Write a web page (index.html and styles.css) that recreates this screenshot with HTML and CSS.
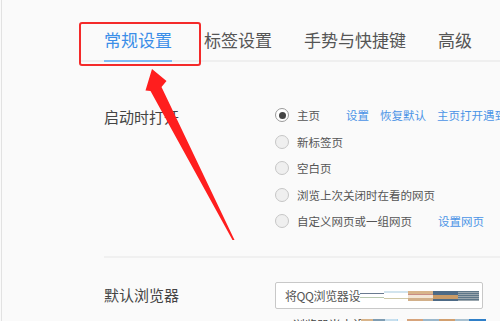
FILE: index.html
```html
<!DOCTYPE html>
<html lang="zh-CN">
<head>
  <meta charset="UTF-8" />
  <meta name="viewport" content="width=device-width, initial-scale=1.0" />
  <title>设置</title>
  <link rel="stylesheet" href="styles.css">
</head>

<body>
  <div class="page">
    <div class="tabs">
      <div class="tab active">常规设置</div>
      <div class="tab">标签设置</div>
      <div class="tab">手势与快捷键</div>
      <div class="tab">高级</div>
    </div>

    <div class="section">
      <div class="label">启动时打开</div>
      <div class="options">
        <div class="option">
          <span class="radio checked"></span>
          <span class="text">主页</span>
          <a class="link first">设置</a>
          <a class="link">恢复默认</a>
          <a class="link">主页打开遇到问题？</a>
        </div>
        <div class="option"><span class="radio"></span><span class="text">新标签页</span></div>
        <div class="option"><span class="radio"></span><span class="text">空白页</span></div>
        <div class="option"><span class="radio"></span><span class="text">浏览上次关闭时在看的网页</span></div>
        <div class="option">
          <span class="radio"></span>
          <span class="text">自定义网页或一组网页</span>
          <a class="link first">设置网页</a>
        </div>
      </div>
    </div>

    <div class="divider"></div>

    <div class="section second">
      <div class="label">默认浏览器</div>
      <div class="options">
        <div class="input">
          <span class="value">将QQ浏览器设</span>
          <span class="glitch"></span>
        </div>
        <div class="below">
          <span>QQ浏览器尚未设为默认</span>
          <span class="glitch small"></span>
        </div>
      </div>
    </div>

    <!-- annotation -->
    <div class="mark"></div>
    <svg class="arrow" width="500" height="321" viewBox="0 0 500 321">
      <polygon points="152,69 166.5,81 161.5,87 234.5,240 232.5,240 150.5,91 145.5,90.5" fill="#ff1e1e" />
    </svg>
  </div>
</body>
</html>
```

FILE: styles.css
```css
html, body {
  margin: 0;
  padding: 0;
  height: 100vh;
  overflow: hidden;
  background-color: #fafafa;
  font-family: "Noto Sans CJK SC", "Noto Sans", sans-serif;
  color: #555;
}

.page {
  position: relative;
  height: 321px;
  margin-left: 1px;
  border-left: 1px solid #e2e2e2;
  white-space: nowrap;
}

.tabs {
  display: flex;
  gap: 32px;
  margin-left: 78px;
  padding-left: 24px;
  border-bottom: 2px solid #efefef;
}

.tab {
  font-size: 17px;
  line-height: 22px;
  padding-top: 29px;
  padding-bottom: 9px;
  border-bottom: 2px solid transparent;
  margin-bottom: -2px;
  color: #555;
}

.tab.active {
  color: #3a8ee8;
  border-bottom-color: #80bbf4;
}

.section {
  display: flex;
  padding-left: 102px;
  margin-top: 40px;
}

.section.second {
  margin-top: 24px;
}

.label {
  width: 171px;
  font-size: 15px;
  line-height: 20px;
  padding-top: 5px;
  color: #444;
  flex-shrink: 0;
}

.section.second .label {
  padding-top: 3px;
}

.options {
  display: flex;
  flex-direction: column;
}

.option {
  display: flex;
  align-items: center;
  height: 26.5px;
  font-size: 11.5px;
}

.radio {
  width: 12px;
  height: 12px;
  border-radius: 50%;
  border: 1px solid #c6c6c6;
  background-color: #efefef;
  margin-right: 8px;
  display: flex;
  align-items: center;
  justify-content: center;
}

.radio.checked {
  background-color: #fff;
  border-color: #9a9a9a;
}

.radio.checked::after {
  content: "";
  width: 7px;
  height: 7px;
  border-radius: 50%;
  background-color: #444;
}

.link {
  color: #4a94e6;
  margin-left: 11px;
}

.link.first {
  margin-left: 26px;
}

.divider {
  height: 2px;
  background-color: #f0f0f0;
  margin: 21px 0 0 102px;
}

.input {
  box-sizing: border-box;
  width: 208px;
  height: 27px;
  border: 1px solid #c8c8c8;
  border-radius: 2px;
  background-color: #fff;
  padding: 0 3px 0 9px;
  display: flex;
  align-items: center;
  overflow: hidden;
  font-size: 12px;
  color: #555;
}

.value {
  flex-shrink: 0;
  letter-spacing: -0.4px;
}

.glitch {
  flex: 1;
  height: 10px;
  margin-top: 1px;
  background:
    linear-gradient(to bottom, transparent 0 2px, #6a7a90 2px 3px, transparent 3px 6px, #b8c8b0 6px 7px, transparent 7px) 0 0 / 24px 100% no-repeat,
    linear-gradient(to bottom, #d2e4ee 0 2px, transparent 2px 7px, #cfc9a8 7px 8px, transparent 8px) 24px 0 / 24px 100% no-repeat,
    linear-gradient(to bottom, #d8b48a 0 3px, #c98e84 3px 4px, #f3e6d6 4px 7px, #d2b08a 7px) 48px 0 / 25px 100% no-repeat,
    linear-gradient(to bottom, #4d6a86 0 4px, #c99a66 4px 8px, #4d6a86 8px) 73px 0 / 25px 100% no-repeat,
    repeating-linear-gradient(to bottom, #5d7688 0 1px, #9aa6ae 1px 2px) 98px 0 / 30px 100% no-repeat;
}

.below {
  display: flex;
  align-items: flex-start;
  margin-top: 9px;
  font-size: 12px;
  line-height: 14px;
  color: #444;
}

.glitch.small {
  flex: none;
  width: 125px;
  height: 6px;
  margin-top: 1px;
  margin-left: -40px;
  background:
    linear-gradient(to right, #d8b48a 0 12px, #7f9db3 12px 24px, #c7dfee 24px 36px, transparent 36px 46px, #d7a47c 46px 62px, #9bb8cc 62px 78px, #d2a070 78px 94px, #a9c1d0 94px 108px, #2f7fc8 108px);
}

.mark {
  position: absolute;
  left: 77px;
  top: 22px;
  width: 118px;
  height: 40px;
  border: 2px solid #f42a2a;
  border-radius: 3px;
}

.arrow {
  position: absolute;
  left: -2px;
  top: 0;
  pointer-events: none;
}
```
